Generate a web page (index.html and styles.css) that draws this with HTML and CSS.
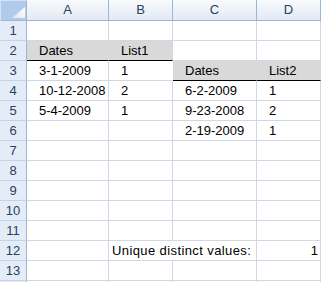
FILE: index.html
```html
<!DOCTYPE html>
<html>
<head>
<meta charset="utf-8">
<link rel="stylesheet" href="styles.css">
</head>
<body>
<div class="sheet">
  <div class="corner"><svg class="tri" width="13" height="11" viewBox="0 0 13 11"><defs><linearGradient id="g" x1="0" y1="1" x2="1" y2="0"><stop offset="0" stop-color="#dfe6ee"/><stop offset="1" stop-color="#ffffff"/></linearGradient></defs><polygon points="13,0 13,11 0,11" fill="url(#g)"/></svg></div>
  <div class="ch">A</div><div class="ch">B</div><div class="ch">C</div><div class="ch">D</div>

  <div class="rh">1</div><div class="c"></div><div class="c"></div><div class="c"></div><div class="c"></div>

  <div class="rh">2</div><div class="c fill line join">Dates</div><div class="c fill line">List1</div><div class="c"></div><div class="c"></div>

  <div class="rh">3</div><div class="c">3-1-2009</div><div class="c pre">1</div><div class="c fill line join">Dates</div><div class="c fill line">List2</div>

  <div class="rh">4</div><div class="c">10-12-2008</div><div class="c">2</div><div class="c">6-2-2009</div><div class="c">1</div>

  <div class="rh">5</div><div class="c">5-4-2009</div><div class="c">1</div><div class="c">9-23-2008</div><div class="c">2</div>

  <div class="rh">6</div><div class="c"></div><div class="c"></div><div class="c">2-19-2009</div><div class="c">1</div>

  <div class="rh">7</div><div class="c"></div><div class="c"></div><div class="c"></div><div class="c"></div>
  <div class="rh">8</div><div class="c"></div><div class="c"></div><div class="c"></div><div class="c"></div>
  <div class="rh">9</div><div class="c"></div><div class="c"></div><div class="c"></div><div class="c"></div>
  <div class="rh">10</div><div class="c"></div><div class="c"></div><div class="c"></div><div class="c"></div>
  <div class="rh">11</div><div class="c"></div><div class="c"></div><div class="c"></div><div class="c"></div>

  <div class="rh">12</div><div class="c"></div><div class="c span2 plain">Unique distinct values:</div><div class="c num">1</div>

  <div class="rh">13</div><div class="c"></div><div class="c"></div><div class="c"></div><div class="c"></div>
  <div class="rh"></div><div class="c"></div><div class="c"></div><div class="c"></div><div class="c"></div>
</div>
</body>
</html>
```
FILE: styles.css
```css
html, body {
  margin: 0;
  padding: 0;
  background: #ffffff;
  overflow: hidden;
}
.sheet {
  display: grid;
  grid-template-columns: 27px 82px 64px 84px 64px;
  grid-template-rows: 21px repeat(14, 20px);
  height: 282px;
  overflow: hidden;
  font-family: "Liberation Sans", Arial, sans-serif;
  font-size: 13px;
  color: #000;
}
.sheet > div {
  box-sizing: border-box;
  overflow: visible;
  white-space: nowrap;
}
.corner {
  background: #b3cbea;
  border: 1px solid #d6e3f4;
  border-right: 1px solid #9eb6ce;
  border-bottom: 1px solid #9eb6ce;
  display: flex;
  justify-content: flex-end;
  align-items: flex-end;
  padding: 0 1px 2px 0;
}
.tri { display: block; }
.ch {
  background: linear-gradient(#f8fafd, #e3eaf4);
  border-right: 1px solid #9eb6ce;
  border-bottom: 1px solid #9eb6ce;
  color: #27415f;
  text-align: center;
  line-height: 20px;
}
.rh {
  background: #e4ecf7;
  border-right: 1px solid #9eb6ce;
  border-bottom: 1px solid #c5d3e4;
  color: #27415f;
  text-align: center;
  line-height: 19px;
}
.c {
  border-right: 1px solid #d0d7e5;
  border-bottom: 1px solid #d0d7e5;
  line-height: 19px;
  padding-left: 12px;
}
.fill {
  background: #d9d9d9;
}
.join { border-right-color: #d9d9d9; }
.line { border-bottom: 1px solid #000; }
.pre { border-right-color: #ffffff; }
.span2 { grid-column: span 2; }
.plain {
  padding-left: 3px;
  letter-spacing: 0.4px;
}
.num {
  text-align: right;
  padding-left: 0;
  padding-right: 2px;
}
```
